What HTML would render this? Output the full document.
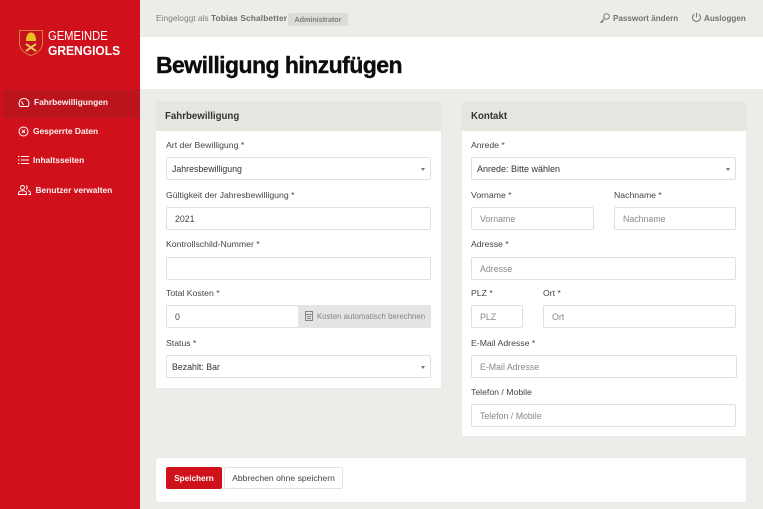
<!DOCTYPE html>
<html><head><meta charset="utf-8"><style>
*{box-sizing:border-box;margin:0;padding:0}
html,body{width:763px;height:509px;overflow:hidden;background:#ecece8;font-family:"Liberation Sans",sans-serif;color:#333}
.a{position:absolute;white-space:nowrap}
#side{left:0;top:0;width:140px;height:509px;background:#d0111b}
#act{left:3px;top:90px;width:137px;height:28px;background:#bb141c;border-radius:2px 0 0 2px}
.nav{color:#fff;font-size:8.400px;font-weight:bold;line-height:12px;opacity:.95}
.card{background:#fff;border-radius:2px;box-shadow:0 0 1px rgba(0,0,0,.1)}
.ch{background:#e6e6e0;border-radius:2px 2px 0 0;height:29px;font-size:9.700px;font-weight:bold;line-height:30px;padding-left:9px;color:#333}
.l{font-size:8.700px;line-height:13px;color:#444}
.f{background:#fff;border:1px solid #e0e0e0;border-radius:2px;font-size:8.800px;color:#444;line-height:22px;padding-left:8px;height:23px}
.s{padding-left:5px;color:#333}
.s:after{content:"";position:absolute;right:5px;top:10px;border:2.500px solid transparent;border-top:3px solid #777;border-bottom:0}
.p{color:#888}
svg{position:absolute;fill:none;stroke:#fff;stroke-width:1}
</style></head><body>
<div class="a" id="side"></div>
<div class="a" id="act"></div>
<svg style="left:19px;top:29px;width:24px;height:28px" viewBox="0 0 24 28"><path d="M.5 1.500h23V14c0 6.500-5.500 10.500-11.500 12.500C6 24.500 .5 20.500 .5 14z" fill="#c4141c" stroke="#e39a4c" stroke-width=".8"/><path d="M12 3.500c3 0 5 3 5 8.500H7c0-5.500 2-8.500 5-8.500z" fill="#e8c020" stroke="none"/><path d="M7 15l10 7M17 15L7 22" stroke="#eed060" stroke-width="1.800"/></svg>
<div class="a" style="left:48px;top:29px;color:#fff;font-size:12.500px;line-height:15px;transform:scaleX(.895);transform-origin:0 0">GEMEINDE</div>
<div class="a" style="left:48px;top:43px;color:#fff;font-size:13px;font-weight:bold;line-height:15px;transform:scaleX(.925);transform-origin:0 0">GRENGIOLS</div>
<svg style="left:18px;top:97px;width:12px;height:11px" viewBox="0 0 12 11"><path d="M2 9.500C.2 7 1 1.500 6 1.500s5.800 5.500 4 8zM5.500 8L3.500 4.500"/></svg>
<div class="a nav" style="left:34px;top:96px">Fahrbewilligungen</div>
<svg style="left:18px;top:126px;width:11px;height:11px" viewBox="0 0 11 11"><circle cx="5.500" cy="5.500" r="4.500"/><path d="M4 4l3 3M7 4L4 7"/></svg>
<div class="a nav" style="left:33px;top:125px">Gesperrte Daten</div>
<svg style="left:18px;top:155px;width:11px;height:10px" viewBox="0 0 11 10"><path d="M0 1.500h1.500M3 1.500h8M0 5h1.500M3 5h8M0 8.500h1.500M3 8.500h8"/></svg>
<div class="a nav" style="left:33px;top:154px">Inhaltsseiten</div>
<svg style="left:18px;top:185px;width:13px;height:10px" viewBox="0 0 13 10"><circle cx="4.500" cy="2.500" r="2"/><path d="M.5 9.500V8c0-3 8-3 8 0v1.500zM8 .7a2 2 0 0 1 0 3.700M10 5.500c2 .5 2.500 1.500 2.500 4h-2"/></svg>
<div class="a nav" style="left:35.500px;top:184px">Benutzer verwalten</div>

<div class="a" style="left:156px;top:12px;font-size:8.400px;line-height:13px;color:#807f7a">Eingeloggt als <b style="color:#6f6e69;letter-spacing:.012em">Tobias Schalbetter</b></div>
<div class="a" style="left:288px;top:13px;width:60px;height:13px;background:#dbdbd8;border-radius:2px;font-size:7.200px;font-weight:bold;line-height:13px;text-align:center;color:#7d7d78">Administrator</div>
<svg style="left:600px;top:13px;width:10px;height:10px;stroke:#807f7a" viewBox="0 0 10 10"><circle cx="6.500" cy="3.500" r="2.800"/><path d="M4.500 5.500L.7 9.300h1.800V8h1.300"/></svg>
<div class="a" style="left:613px;top:12px;font-size:8.100px;font-weight:bold;line-height:13px;color:#73726d">Passwort ändern</div>
<svg style="left:691px;top:12px;width:11px;height:11px;stroke:#73726d" viewBox="0 0 11 11"><path d="M3.200 2.200a4 4 0 1 0 4.600 0M5.500 .8v4.500"/></svg>
<div class="a" style="left:704px;top:12px;font-size:8.100px;font-weight:bold;line-height:13px;color:#73726d">Ausloggen</div>

<div class="a" style="left:140px;top:37px;width:623px;height:52px;background:#fff"></div>
<div class="a" style="left:156px;top:51px;font-size:23px;font-weight:bold;line-height:29px;color:#0d0d0d;letter-spacing:-.55px;-webkit-text-stroke:.4px #0d0d0d">Bewilligung hinzufügen</div>

<div class="a card" style="left:156px;top:102px;width:285px;height:286px"><div class="ch">Fahrbewilligung</div></div>
<div class="a card" style="left:462px;top:102px;width:284px;height:334px"><div class="ch">Kontakt</div></div>
<div class="a card" style="left:156px;top:458px;width:590px;height:44px"></div>

<div class="a l" style="left:166px;top:139px">Art der Bewilligung *</div>
<div class="a f s" style="left:166px;top:157px;width:265px">Jahresbewilligung</div>
<div class="a l" style="left:166px;top:189px">Gültigkeit der Jahresbewilligung *</div>
<div class="a f" style="left:166px;top:207px;width:265px">2021</div>
<div class="a l" style="left:166px;top:238px">Kontrollschild-Nummer *</div>
<div class="a f" style="left:166px;top:257px;width:265px"></div>
<div class="a l" style="left:166px;top:287px">Total Kosten *</div>
<div class="a f" style="left:166px;top:305px;width:133px">0</div>
<div class="a" style="left:298px;top:305px;width:133px;height:23px;background:#e4e4e4;border-radius:0 2px 2px 0;font-size:7.850px;line-height:23px;color:#85857f;padding-left:19px">Kosten automatisch berechnen</div>
<svg style="left:305px;top:311px;width:8px;height:10px;stroke:#85857f" viewBox="0 0 8 10"><rect x=".5" y=".5" width="7" height="9"/><path d="M.5 3.500h7M2 5.500h4M2 7.500h4"/></svg>
<div class="a l" style="left:166px;top:337px">Status *</div>
<div class="a f s" style="left:166px;top:355px;width:265px">Bezahlt: Bar</div>

<div class="a l" style="left:471px;top:139px">Anrede *</div>
<div class="a f s" style="left:471px;top:157px;width:265px;font-size:9px">Anrede: Bitte wählen</div>
<div class="a l" style="left:471px;top:189px">Vorname *</div>
<div class="a f p" style="left:471px;top:207px;width:123px">Vorname</div>
<div class="a l" style="left:614px;top:189px">Nachname *</div>
<div class="a f p" style="left:614px;top:207px;width:122px">Nachname</div>
<div class="a l" style="left:471px;top:238px">Adresse *</div>
<div class="a f p" style="left:471px;top:257px;width:265px">Adresse</div>
<div class="a l" style="left:471px;top:287px">PLZ *</div>
<div class="a f p" style="left:471px;top:305px;width:52px">PLZ</div>
<div class="a l" style="left:543px;top:287px">Ort *</div>
<div class="a f p" style="left:543px;top:305px;width:193px">Ort</div>
<div class="a l" style="left:471px;top:337px">E-Mail Adresse *</div>
<div class="a f p" style="left:471px;top:355px;width:266px">E-Mail Adresse</div>
<div class="a l" style="left:471px;top:386px">Telefon / Mobile</div>
<div class="a f p" style="left:471px;top:404px;width:265px">Telefon / Mobile</div>

<div class="a" style="left:166px;top:467px;width:56px;height:22px;background:#cf111b;border-radius:2px;color:#fff;font-size:8.200px;font-weight:bold;line-height:23px;text-align:center">Speichern</div>
<div class="a" style="left:224px;top:467px;width:119px;height:22px;background:#fff;border:1px solid #e2e2e2;border-radius:2px;color:#444;font-size:8.600px;line-height:20px;text-align:center">Abbrechen ohne speichern</div>
</body></html>
